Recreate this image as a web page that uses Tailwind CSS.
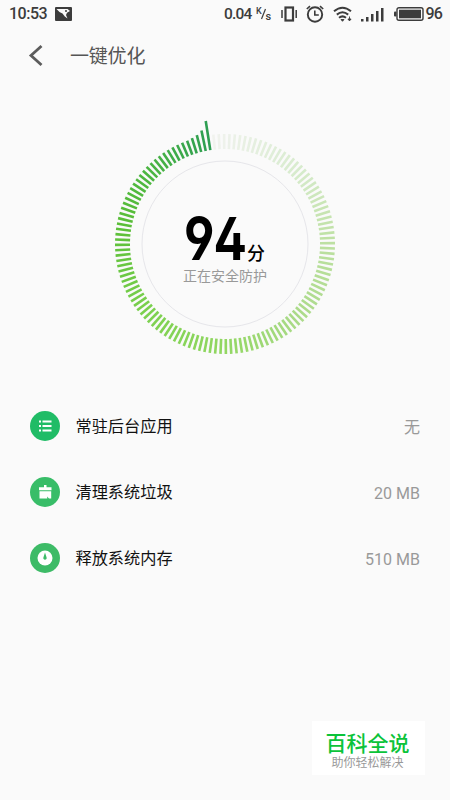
<!DOCTYPE html>
<html lang="zh-CN">

<head>
    <meta charset="UTF-8">
    <meta name="viewport" content="width=device-width, initial-scale=1.0">
    <title>一键优化</title>
    <script src="https://cdn.jsdelivr.net/npm/@tailwindcss/browser@4"></script>
</head>

<body class="relative h-screen w-screen overflow-hidden bg-[#fafafa] font-[Roboto,'Noto_Sans_CJK_SC',sans-serif]">

    <div id="status-bar" class="flex h-7 items-center justify-between pl-[9px] pr-2 text-[#3c3c3c]">
        <div class="flex items-center gap-2">
            <span class="text-base leading-7 font-medium tracking-[-0.5px]">10:53</span>
            <svg class="h-[14px] w-[17px]" viewBox="0 0 17 14">
                <rect width="17" height="14" rx="1" fill="#3c3c3c" />
                <path d="M1.500 2H12.500L15 4L12 5.800L11 8L12.500 11.500L9.800 9.500L7.500 6.500L4.500 5Z" fill="#fafafa" />
                <circle cx="11" cy="4" r="1" fill="#3c3c3c" />
            </svg>
        </div>
        <div class="flex items-center">
            <span class="text-[15.500px] leading-7 font-medium tracking-[-0.8px]">0.04</span>
            <svg class="ml-[4px] h-4 w-4 font-medium" viewBox="0 0 16 16" fill="#3c3c3c">
                <text x="0" y="7.500" font-size="9">K</text>
                <path d="M5.500 13L9.500 3" stroke="#3c3c3c" stroke-width="1.200" />
                <text x="9.500" y="14" font-size="11">s</text>
            </svg>
            <svg class="ml-[9px] h-4 w-4" viewBox="0 0 16 16" fill="none" stroke="#3c3c3c">
                <rect x="4.500" y="1.500" width="7.500" height="13" stroke-width="2.200" />
                <path d="M1 4V12M15.200 4V12" stroke-width="1.500" />
            </svg>
            <svg class="ml-[9px] h-[18px] w-[18px]" viewBox="0 0 18 18" fill="none" stroke="#3c3c3c" stroke-width="1.900">
                <circle cx="9" cy="9.500" r="7.200" />
                <path d="M8.800 5.500V10H12.800M0.800 4L4 1.200M17.200 4L14 1.200" stroke-width="1.600" />
            </svg>
            <svg class="ml-[9px] h-4 w-5" viewBox="0 0 20 16" fill="none" stroke="#3c3c3c" stroke-width="2">
                <path d="M1 5.300Q9.500 -1.800 18 5.300M3.800 8.600Q9.500 4 15.200 8.600M6 11.700Q9.500 9 13 11.700" />
                <path d="M8 13.500H11L9.500 15.300ZM16.500 10.500V14M14.900 13L16.500 14.900L18.100 13Z" fill="#3c3c3c" stroke-width="0.900" />
            </svg>
            <svg class="ml-[8px] h-[15px] w-[23px]" viewBox="0 0 23 15" fill="#3c3c3c">
                <path d="M0 12h2.500v2.500H0zM5 10h2.500v4.500H5zM10 7h2.500v7.500H10zM15 4h2.500v10.500H15zM20 1h2.500v13.500H20z" />
            </svg>
            <svg class="ml-[10px] h-[14px] w-[30px]" viewBox="0 0 30 14">
                <rect x="3" y="0.700" width="26" height="12.600" rx="2" fill="none" stroke="#3c3c3c" stroke-width="1.400" />
                <rect x="5" y="2.700" width="22" height="8.600" fill="#3c3c3c" />
                <rect y="4.500" width="2.500" height="5" rx="1" fill="#3c3c3c" />
            </svg>
            <span class="ml-[2px] text-base leading-7 font-medium tracking-[-0.9px]">96</span>
        </div>
    </div>

    <header class="flex h-[54px] items-center pl-7 text-[#555]">
        <svg class="h-6 w-4" viewBox="0 0 16 24" fill="none" stroke="#5c5c5c" stroke-width="2.800">
            <path d="M13.500 3L3 12.500L13.500 22" />
        </svg>
        <h1 class="ml-[26px] pt-[3px] text-[19px] leading-7 tracking-[-0.2px]">一键优化</h1>
    </header>

    <div id="score" class="grid h-[311px] justify-items-center">
        <svg id="dial" class="col-start-1 row-start-1 mt-8 h-[260px] w-[260px]" viewBox="-130 -130 260 260">
            <circle r="83" fill="none" stroke="#e6e6ea" stroke-width="1" />
        </svg>
        <div class="col-start-1 row-start-1 flex flex-col items-center pt-[132px]">
            <div class="flex items-baseline gap-px pl-px leading-[50px] text-black">
                <span class="flex w-[60px] justify-center">
                    <span id="points" class="scale-x-[0.84] font-[Inter] text-[59px] font-bold tracking-[1px]">94</span>
                </span>
                <span class="text-lg font-medium">分</span>
            </div>
            <p class="-mt-[3px] text-sm leading-[22px] text-[#999]">正在安全防护</p>
        </div>
    </div>

    <ul class="text-base text-[#111]">
        <li class="flex h-[66px] items-center px-[30px]">
            <svg class="h-[30px] w-[30px]" viewBox="0 0 30 30">
                <circle cx="15" cy="15" r="15" fill="#20bc66" />
                <path d="M9 9.500h2v2H9zM12.500 9.500h9v2h-9zM9 14h2v2H9zM12.500 14h9v2h-9zM9 18.500h2v2H9zM12.500 18.500h9v2h-9z" fill="#fff" />
            </svg>
            <span class="ml-[15.500px] flex-1 pt-[3px] text-[16.200px]">常驻后台应用</span>
            <span class="pt-[3px] text-[#999]">无</span>
        </li>
        <li class="flex h-[66px] items-center px-[30px]">
            <svg class="h-[30px] w-[30px]" viewBox="0 0 30 30">
                <circle cx="15" cy="15" r="15" fill="#38bd68" />
                <path d="M14 8h2.500v2.300H21.500v3H9v-3h5zM9.500 14.300h11.700V21.500H19l-2-2 .3 2H9.500z" fill="#fff" />
            </svg>
            <span class="ml-[15.500px] flex-1 pt-[3px] text-[16.200px]">清理系统垃圾</span>
            <span class="pt-[3px] text-[#999]">20 MB</span>
        </li>
        <li class="flex h-[66px] items-center px-[30px]">
            <svg class="h-[30px] w-[30px]" viewBox="0 0 30 30">
                <circle cx="15" cy="15" r="15" fill="#3dbb67" />
                <circle cx="15" cy="15" r="7.500" fill="#fff" />
                <path d="M15 9.500L16.600 14.500A1.700 1.700 0 1 1 13.400 14.500Z" fill="#3dbb67" />
            </svg>
            <span class="ml-[15.500px] flex-1 pt-[3px] text-[16.200px]">释放系统内存</span>
            <span class="pt-[3px] text-[#999]">510 MB</span>
        </li>
    </ul>

    <div id="brand" class="absolute top-[721px] left-[312px] flex h-[54px] w-[113px] flex-col items-center bg-white pt-[10px] pr-[2px]">
        <span class="text-[21px] leading-[26px] font-medium text-[#0bc33a]">百科全说</span>
        <span class="text-xs leading-3 text-[#999]">助你轻松解决</span>
    </div>

    <script>
        const dial = document.getElementById('dial');
        const COUNT = 128;
        const START = -8.9;

        // colour stops, degrees clockwise from the first faded tick
        const stops = [
            [0, [242, 243, 240]],
            [50, [217, 236, 208]],
            [100, [188, 224, 160]],
            [145, [170, 218, 136]],
            [190, [146, 215, 98]],
            [240, [122, 208, 77]],
            [290, [90, 190, 56]],
            [325, [74, 181, 66]],
            [360, [46, 158, 82]],
        ];

        function colorAt(deg) {
            const i = Math.max(1, stops.findIndex((s) => s[0] >= deg));
            const [a, ca] = stops[i - 1];
            const [b, cb] = stops[i];
            const t = (deg - a) / (b - a);
            return `rgb(${ca.map((c, k) => Math.round(c + (cb[k] - c) * t)).join(',')})`;
        }

        // the last ticks before the pointer grow outwards
        const tails = { 128: 124.5, 127: 116, 126: 112.5, 125: 111 };

        for (let i = 1; i <= COUNT; i++) {
            const deg = (i * 360) / COUNT;
            const line = document.createElementNS('http://www.w3.org/2000/svg', 'line');
            line.setAttribute('y1', -95);
            line.setAttribute('y2', -(tails[i] || 110));
            line.setAttribute('stroke', colorAt(deg));
            line.setAttribute('stroke-width', 2.6);
            line.setAttribute('transform', `rotate(${START + deg})`);
            dial.appendChild(line);
        }

        document.getElementById('points').style.fontFeatureSettings = '"cv02", "cv04"';
    </script>
</body>

</html>
